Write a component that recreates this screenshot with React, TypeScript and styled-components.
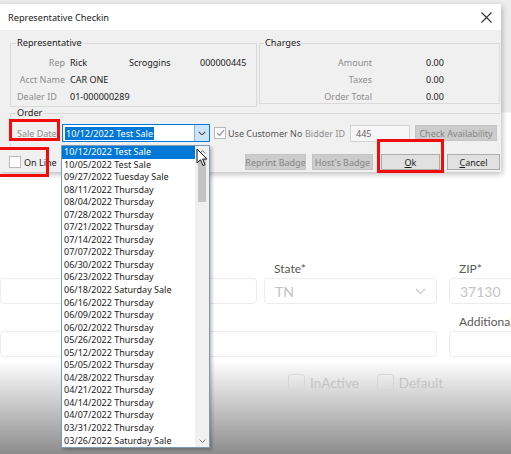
import React from 'react';
import styled, { createGlobalStyle } from 'styled-components';

const GlobalStyle = createGlobalStyle`
  html, body { margin: 0; padding: 0; }
  body { width: 511px; height: 454px; overflow: hidden; background: #fff; }
  * { box-sizing: border-box; }
`;

const Screen = styled.div`
  position: relative;
  width: 511px;
  height: 454px;
  overflow: hidden;
  background: linear-gradient(to bottom, #ededed 0, #ededed 112px, #fff 113px, #fff 360px, #8c8c8c 454px);
  font-family: 'Noto Sans', 'Open Sans', sans-serif;
`;

/* ---------- web page behind the dialog ---------- */

const Page = styled.div`
  padding-top: 259px;
  font-family: Lato, 'Open Sans', sans-serif;
`;

const FormGrid = styled.div`
  display: grid;
  grid-template-columns: 264px 185px 1fr;
  row-gap: 8px;
`;

const Field = styled.div<{ $span?: number; $w: number }>`
  grid-column: span ${p => p.$span ?? 1};
  width: ${p => p.$w}px;
  display: flex;
  flex-direction: column;
`;

const FieldLabel = styled.div`
  height: 19px;
  line-height: 19px;
  padding-left: 10px;
  font-size: 12px;
  color: #5a5a5a;
  white-space: nowrap;
`;

const FieldBox = styled.div`
  height: 26px;
  border: 1px solid #ececec;
  border-radius: 4px;
  background: #fff;
  display: flex;
  align-items: center;
  justify-content: space-between;
  padding: 0 10px;
  font-size: 14px;
  color: #c3c3c3;
`;

const CheckRow = styled.div`
  display: flex;
  gap: 18px;
  margin-top: 17px;
  padding-left: 288px;
`;

const WebCheck = styled.label`
  display: flex;
  align-items: center;
  gap: 5px;
  font-size: 13.5px;
  color: #c4c4c4;
`;

const WebBox = styled.span`
  width: 17px;
  height: 17px;
  border: 1px solid #d6d6d6;
  border-radius: 3px;
`;

/* ---------- dialog ---------- */

const Dialog = styled.div`
  position: absolute;
  left: -1px;
  top: 4px;
  width: 502px;
  height: 168px;
  background: #f0f0f0;
  box-shadow: 1px 2px 6px rgba(0, 0, 0, 0.28);
  display: flex;
  flex-direction: column;
  font-size: 9px;
  color: #1a1a1a;
`;

const TitleBar = styled.div`
  height: 26px;
  background: #fff;
  display: flex;
  align-items: center;
  justify-content: space-between;
  padding: 0 9px;
  font-size: 9.2px;
`;

const Body = styled.div`
  padding: 7px 1px 0 11px;
`;

const GroupsRow = styled.div`
  display: flex;
  align-items: flex-start;
  gap: 2px;
`;

const GroupBox = styled.fieldset<{ $w?: number; $h: number; $open?: boolean }>`
  margin: 0;
  padding: 5px 0 0 0;
  min-width: 0;
  border: 1px solid #d9d9d9;
  ${p => (p.$open ? 'border-right: none; border-bottom: none;' : '')}
  height: ${p => p.$h}px;
  ${p => (p.$w ? `width: ${p.$w}px;` : 'flex: 1;')}
`;

const Legend = styled.legend<{ $x?: number }>`
  padding: 0 1px;
  margin-left: ${p => p.$x ?? 5}px;
  font-size: 9.2px;
  line-height: 12px;
  color: #1a1a1a;
`;

const InfoRow = styled.div<{ $cols: string }>`
  display: grid;
  grid-template-columns: ${p => p.$cols};
  height: 17px;
  line-height: 17px;
  white-space: nowrap;
`;

const InfoLabel = styled.span<{ $align?: 'left' | 'right'; $pad?: number }>`
  color: #8c8c8c;
  text-align: ${p => p.$align ?? 'right'};
  padding-left: ${p => (p.$align === 'left' ? 6 : 0)}px;
  padding-right: ${p => p.$pad ?? 5}px;
`;

const InfoValue = styled.span`
  color: #1a1a1a;
`;

const OrderRow = styled.div`
  display: flex;
  align-items: center;
  height: 18px;
  padding-left: 6px;
  white-space: nowrap;
`;

const GrayLabel = styled.span<{ $w: number }>`
  width: ${p => p.$w}px;
  color: #8c8c8c;
  flex: none;
`;

const Combo = styled.div`
  width: 148px;
  height: 18px;
  border: 1px solid #0078d7;
  background: #fff;
  display: flex;
  align-items: center;
  flex: none;
`;

const ComboText = styled.span`
  flex: 1;
  padding-left: 2px;
  display: flex;
`;

const Selected = styled.span`
  background: #0078d7;
  color: #fff;
  padding: 0 1px;
  line-height: 13px;
`;

const ComboButton = styled.span`
  width: 15px;
  height: 100%;
  background: #cce4f7;
  border-left: 1px solid #7eb4ea;
  display: flex;
  align-items: center;
  justify-content: center;
`;

const WinCheck = styled.span<{ $gap?: number }>`
  width: 12px;
  height: 12px;
  border: 1px solid #b9b9b9;
  background: #fff;
  flex: none;
  display: flex;
  align-items: center;
  justify-content: center;
  margin-right: ${p => p.$gap ?? 2}px;
`;

const ClipText = styled.span<{ $w: number; $color?: string }>`
  width: ${p => p.$w}px;
  overflow: hidden;
  color: ${p => p.$color ?? '#555'};
  flex: none;
`;

const TextBox = styled.span`
  width: 60px;
  height: 17px;
  border: 1px solid #d2d2d2;
  background: #f6f6f6;
  color: #666;
  padding-left: 5px;
  line-height: 15px;
  flex: none;
`;

const WinButton = styled.span<{ $w: number; $disabled?: boolean; $ml?: number }>`
  width: ${p => p.$w}px;
  height: 16px;
  margin-left: ${p => p.$ml ?? 0}px;
  flex: none;
  display: flex;
  justify-content: center;
  align-items: center;
  overflow: hidden;
  white-space: nowrap;
  background: ${p => (p.$disabled ? '#cccccc' : '#e1e1e1')};
  border: 1px solid ${p => (p.$disabled ? '#c4c4c4' : '#adadad')};
  color: ${p => (p.$disabled ? '#858585' : '#1a1a1a')};
  u { text-decoration: underline; }
`;

const ButtonRow = styled.div`
  display: flex;
  align-items: center;
  padding-top: 6px;
  height: 22px;
  margin-left: -1px;
`;

const OnLine = styled.span`
  display: flex;
  align-items: center;
  color: #1a1a1a;
  margin-right: auto;
`;

/* ---------- overlays ---------- */

const DropList = styled.div`
  position: absolute;
  left: 61px;
  top: 145px;
  width: 149px;
  height: 303px;
  background: #fff;
  border: 1px solid #7d9bb3;
  box-shadow: 2px 2px 3px rgba(0, 0, 0, 0.25);
  display: flex;
  font-size: 9px;
  overflow: hidden;
`;

const Items = styled.div`
  flex: 1;
`;

const Item = styled.div<{ $active?: boolean }>`
  height: 12.55px;
  line-height: 12.55px;
  padding-left: 2px;
  white-space: nowrap;
  color: ${p => (p.$active ? '#fff' : '#1a1a1a')};
  background: ${p => (p.$active ? '#0078d7' : 'transparent')};
`;

const ScrollBar = styled.div`
  width: 14px;
  background: #f0f0f0;
  display: flex;
  flex-direction: column;
  align-items: center;
`;

const ScrollArrow = styled.span`
  height: 12px;
  display: flex;
  align-items: center;
  justify-content: center;
`;

const Thumb = styled.span`
  width: 8px;
  height: 44px;
  background: #c4c4c4;
`;

const Track = styled.span`
  flex: 1;
`;

const Highlight = styled.div<{ $x: number; $y: number; $w: number; $h: number }>`
  position: absolute;
  left: ${p => p.$x}px;
  top: ${p => p.$y}px;
  width: ${p => p.$w}px;
  height: ${p => p.$h}px;
  border: 3px solid #f20d0d;
  pointer-events: none;
`;

const Cursor = styled.svg`
  position: absolute;
  left: 196px;
  top: 148px;
`;

const Chevron = ({ up, color = '#555', size = 8 }: { up?: boolean; color?: string; size?: number }) => (
  <svg width={size} height={size * 0.6} viewBox="0 0 10 6">
    <path d={up ? 'M1 5 L5 1 L9 5' : 'M1 1 L5 5 L9 1'} fill="none" stroke={color} strokeWidth="1.3" />
  </svg>
);

const Tick = ({ color = '#9a9a9a' }: { color?: string }) => (
  <svg width="9" height="8" viewBox="0 0 9 8">
    <path d="M1 4 L3.5 6.5 L8 1" fill="none" stroke={color} strokeWidth="1.2" />
  </svg>
);

const saleDates = [
  '10/12/2022 Test Sale',
  '10/05/2022 Test Sale',
  '09/27/2022 Tuesday Sale',
  '08/11/2022 Thursday',
  '08/04/2022 Thursday',
  '07/28/2022 Thursday',
  '07/21/2022 Thursday',
  '07/14/2022 Thursday',
  '07/07/2022 Thursday',
  '06/30/2022 Thursday',
  '06/23/2022 Thursday',
  '06/18/2022 Saturday Sale',
  '06/16/2022 Thursday',
  '06/09/2022 Thursday',
  '06/02/2022 Thursday',
  '05/26/2022 Thursday',
  '05/12/2022 Thursday',
  '05/05/2022 Thursday',
  '04/28/2022 Thursday',
  '04/21/2022 Thursday',
  '04/14/2022 Thursday',
  '04/07/2022 Thursday',
  '03/31/2022 Thursday',
  '03/26/2022 Saturday Sale',
];

const repCols = '59px 59px 71px 1fr';
const chargeCols = '112px 54px 1fr';

export default function App() {
  return (
    <Screen>
      <GlobalStyle />

      <Page>
        <FormGrid>
          <Field $w={257}>
            <FieldLabel />
            <FieldBox />
          </Field>
          <Field $w={173}>
            <FieldLabel>State*</FieldLabel>
            <FieldBox>
              TN
              <Chevron color="#cfcfcf" size={11} />
            </FieldBox>
          </Field>
          <Field $w={120}>
            <FieldLabel>ZIP*</FieldLabel>
            <FieldBox>37130</FieldBox>
          </Field>
          <Field $span={2} $w={437}>
            <FieldLabel />
            <FieldBox />
          </Field>
          <Field $w={120}>
            <FieldLabel>Additional Address</FieldLabel>
            <FieldBox />
          </Field>
        </FormGrid>
        <CheckRow>
          <WebCheck>
            <WebBox />
            InActive
          </WebCheck>
          <WebCheck>
            <WebBox />
            Default
          </WebCheck>
        </CheckRow>
      </Page>

      <Dialog>
        <TitleBar>
          Representative Checkin
          <svg width="11" height="11" viewBox="0 0 11 11">
            <path d="M0.5 0.5 L10.5 10.5 M10.5 0.5 L0.5 10.5" stroke="#333" strokeWidth="1.1" />
          </svg>
        </TitleBar>

        <Body>
          <GroupsRow>
            <GroupBox $w={247} $h={70}>
              <Legend>Representative</Legend>
              <InfoRow $cols={repCols}>
                <InfoLabel>Rep</InfoLabel>
                <InfoValue>Rick</InfoValue>
                <InfoValue>Scroggins</InfoValue>
                <InfoValue>000000445</InfoValue>
              </InfoRow>
              <InfoRow $cols={repCols}>
                <InfoLabel>Acct Name</InfoLabel>
                <InfoValue>CAR ONE</InfoValue>
              </InfoRow>
              <InfoRow $cols={repCols}>
                <InfoLabel $align="left">Dealer ID</InfoLabel>
                <InfoValue>01-000000289</InfoValue>
              </InfoRow>
            </GroupBox>

            <GroupBox $h={67}>
              <Legend $x={4}>Charges</Legend>
              <InfoRow $cols={chargeCols}>
                <InfoLabel $pad={0}>Amount</InfoLabel>
                <span />
                <InfoValue>0.00</InfoValue>
              </InfoRow>
              <InfoRow $cols={chargeCols}>
                <InfoLabel $pad={0}>Taxes</InfoLabel>
                <span />
                <InfoValue>0.00</InfoValue>
              </InfoRow>
              <InfoRow $cols={chargeCols}>
                <InfoLabel $pad={0}>Order Total</InfoLabel>
                <span />
                <InfoValue>0.00</InfoValue>
              </InfoRow>
            </GroupBox>
          </GroupsRow>

          <GroupBox $h={41} $open>
            <Legend>Order</Legend>
            <OrderRow>
              <GrayLabel $w={45}>Sale Date</GrayLabel>
              <Combo>
                <ComboText>
                  <Selected>10/12/2022 Test Sale</Selected>
                </ComboText>
                <ComboButton>
                  <Chevron color="#444" />
                </ComboButton>
              </Combo>
              <span style={{ width: 4 }} />
              <WinCheck>
                <Tick />
              </WinCheck>
              <ClipText $w={77}>Use Customer No</ClipText>
              <GrayLabel $w={45}>Bidder ID</GrayLabel>
              <TextBox>445</TextBox>
              <WinButton $w={82} $disabled $ml={5}>
                Check Availability
              </WinButton>
            </OrderRow>
          </GroupBox>

          <ButtonRow>
            <OnLine>
              <WinCheck $gap={3} />
              On Line
            </OnLine>
            <WinButton $w={61} $disabled>
              Reprint Badge
            </WinButton>
            <WinButton $w={61} $disabled $ml={6}>
              Host's Badge
            </WinButton>
            <WinButton $w={59} $ml={8}>
              <u>O</u>k
            </WinButton>
            <WinButton $w={53} $ml={7}>
              <u>C</u>ancel
            </WinButton>
          </ButtonRow>
        </Body>
      </Dialog>

      <DropList>
        <Items>
          {saleDates.map((d, i) => (
            <Item key={d} $active={i === 0}>
              {d}
            </Item>
          ))}
        </Items>
        <ScrollBar>
          <ScrollArrow>
            <Chevron up color="#606060" size={7} />
          </ScrollArrow>
          <Thumb />
          <Track />
          <ScrollArrow>
            <Chevron color="#606060" size={7} />
          </ScrollArrow>
        </ScrollBar>
      </DropList>

      <Cursor width="12" height="19" viewBox="0 0 12 19">
        <path d="M1 1 L1 15 L4.5 11.8 L7 17.5 L9 16.6 L6.6 11 L11 11 Z" fill="#fff" stroke="#111" strokeWidth="1" />
      </Cursor>

      <Highlight $x={9} $y={119} $w={51} $h={22} />
      <Highlight $x={-3} $y={147} $w={52} $h={30} />
      <Highlight $x={377} $y={139} $w={67} $h={34} />
    </Screen>
  );
}
